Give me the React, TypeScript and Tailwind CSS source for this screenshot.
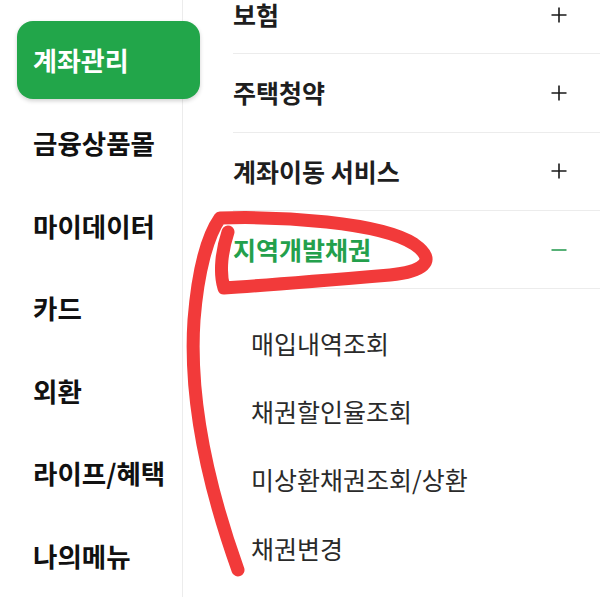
import React from "react";

const sideMenu = ["금융상품몰", "마이데이터", "카드", "외환", "라이프/혜택", "나의메뉴"];

const groups = [
  { label: "보험", open: false },
  { label: "주택청약", open: false },
  { label: "계좌이동 서비스", open: false },
  { label: "지역개발채권", open: true },
];

const subMenu = ["매입내역조회", "채권할인율조회", "미상환채권조회/상환", "채권변경"];

function PlusIcon() {
  return (
    <svg width="16" height="16" viewBox="0 0 16 16" fill="none" stroke="#1a1a1a" strokeWidth="1.6">
      <path d="M8 0.5v15M0.5 8h15" />
    </svg>
  );
}

function MinusIcon() {
  return (
    <svg width="16" height="16" viewBox="0 0 16 16" fill="none" stroke="#2e9e55" strokeWidth="1.6">
      <path d="M0.5 8h15" />
    </svg>
  );
}

export default function App() {
  return (
    <div
      className="relative w-[600px] h-[597px] overflow-hidden bg-white flex"
      style={{ fontFamily: '"Noto Sans CJK KR", "Noto Sans", sans-serif' }}
    >
      {/* left category column */}
      <aside className="w-[183px] shrink-0 border-r border-[#ececec] pt-[21px] flex flex-col">
        <div className="relative z-10 ml-[17px] w-[183px] h-[80px] rounded-[16px] bg-[#22a64a] shadow-[0_2px_4px_rgba(0,0,0,0.18)] flex items-center pl-[16px]">
          <span className="text-[26px] font-bold text-white leading-none">계좌관리</span>
        </div>
        <ul className="mt-[3px]">
          {sideMenu.map((item) => (
            <li key={item} className="h-[82.5px] flex items-center pl-[33px] text-[26.5px] font-bold text-[#111] leading-none">
              {item}
            </li>
          ))}
        </ul>
      </aside>

      {/* right accordion */}
      <main className="flex-1 pl-[50px] mt-[-24px]">
        {groups.map((g) => (
          <div key={g.label} className="h-[78.3px] border-b border-[#ececec] flex items-center justify-between pr-[33px]">
            <span className={`text-[25px] font-bold leading-none ${g.open ? "text-[#23a04c]" : "text-[#1e1e1e]"}`}>
              {g.label}
            </span>
            {g.open ? <MinusIcon /> : <PlusIcon />}
          </div>
        ))}
        <ul className="pt-[20px] pl-[18px]">
          {subMenu.map((s) => (
            <li key={s} className="h-[68.3px] flex items-center text-[25px] text-[#2a2a2a] leading-none">
              {s}
            </li>
          ))}
        </ul>
      </main>

      {/* hand-drawn annotation */}
      <svg className="absolute inset-0 pointer-events-none" width="600" height="597" viewBox="0 0 600 597" fill="none">
        <path
          d="M238 570 C 213 500, 188 410, 194 320 C 198 270, 208 235, 220 218 C 280 216, 380 222, 414 244 C 440 262, 420 272, 390 275 C 330 280, 270 285, 224 288 C 219 272, 222 250, 228 232"
          stroke="#f23a3a"
          strokeWidth="13"
          strokeLinecap="round"
          strokeLinejoin="round"
        />
      </svg>
    </div>
  );
}
